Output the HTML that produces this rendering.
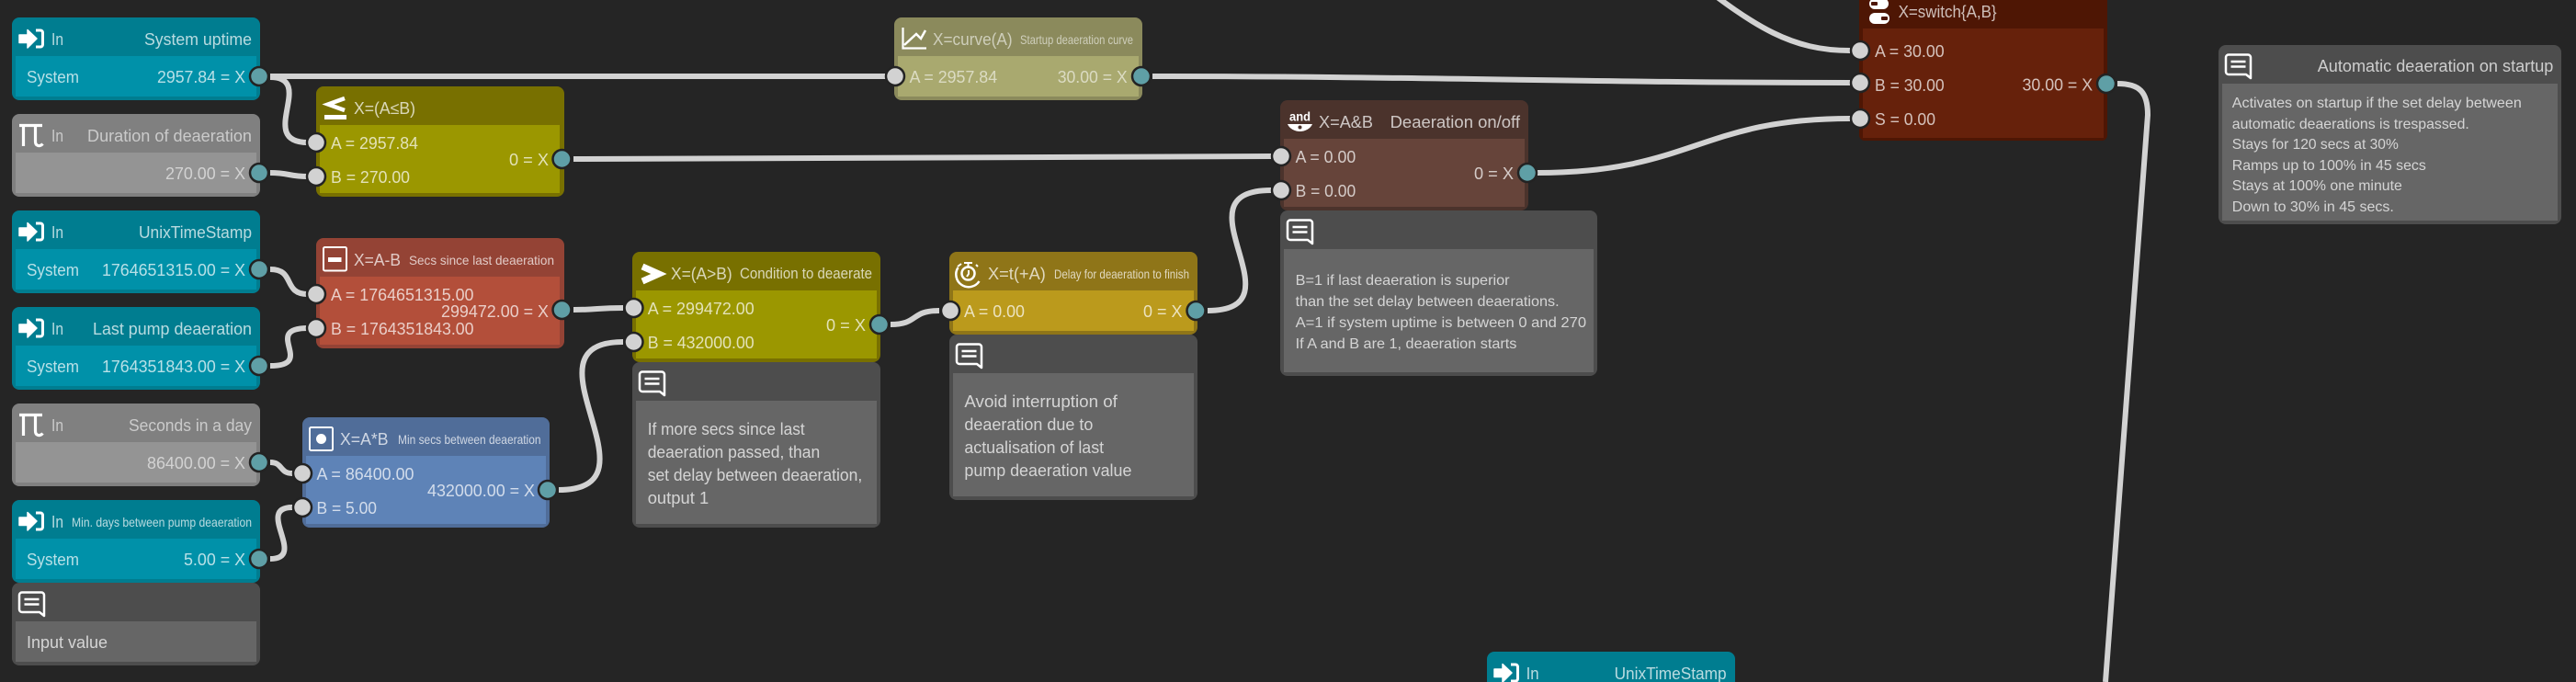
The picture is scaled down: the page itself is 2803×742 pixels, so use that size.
<!DOCTYPE html>
<html><head><meta charset="utf-8"><title>Node graph</title>
<style>
html,body{margin:0;padding:0;background:#252525;width:2803px;height:742px;overflow:hidden}
svg{display:block}
text{font-family:"Liberation Sans",sans-serif;font-size:18.5px;fill:#fff;fill-opacity:.72}
.s{font-size:14px}
.m{font-size:16.5px}
.c{font-size:16px}
.d text{fill-opacity:.58}
.w{fill:none;stroke:#d2d2d2;stroke-width:6}
.pi{fill:#d2d2d2;stroke:#232323;stroke-width:2.500}
.po{fill:#5f9fa6;stroke:#232323;stroke-width:2.500}
</style></head><body>
<svg xmlns="http://www.w3.org/2000/svg" width="2803" height="742" viewBox="0 0 2803 742">
<defs>
<symbol id="inp" overflow="visible"><path d="M8 9h9V3.500L27 13 17 23v-5.500H8z" fill="#fff" stroke="#fff" stroke-width="1.500" stroke-linejoin="round"/><path d="M26 4h5a2.500 2.500 0 0 1 2.500 2.500v13a2.500 2.500 0 0 1-2.500 2.500h-5" fill="none" stroke="#fff" stroke-width="3"/></symbol>
<symbol id="pi" overflow="visible"><path d="M8 3.500H33M12.500 3.500V26M25.500 3.500V21c0 5 5 6 8 2.500" fill="none" stroke="#fff" stroke-width="3.200"/></symbol>
<symbol id="cm" overflow="visible"><path d="M8 3.500a3 3 0 0 1 3-3h21a3 3 0 0 1 3 3V26l-5-4H11a3 3 0 0 1-3-3z" fill="none" stroke="#fff" stroke-width="2.500" stroke-linejoin="round"/><path d="M13.500 8h16M13.500 13.500h16" stroke="#fff" stroke-width="2.500"/></symbol>
</defs>

<rect width="2803" height="742" fill="#252525"/>

<!-- wires -->
<path class="w" d="M294 83H974"/>
<path class="w" d="M294 84C345 84 278 155 335 155"/>
<path class="w" d="M294 188C315 188 314 192 335 192"/>
<path class="w" d="M294 293C322 293 307 320 335 320"/>
<path class="w" d="M294 398C345 398 284 357 335 357"/>
<path class="w" d="M294 503C308 503 304 515 318 515"/>
<path class="w" d="M294 608C335 608 277 552 318 552"/>
<path class="w" d="M624 173C900 173 1100 170 1383 170"/>
<path class="w" d="M624 337C650 337 650 335 678 335"/>
<path class="w" d="M608 533C725 533 561 372 678 372"/>
<path class="w" d="M969 353C1000 353 990 338 1022 338"/>
<path class="w" d="M1314 338C1420 338 1275 207 1383 207"/>
<path class="w" d="M1254 83C1550 83 1720 90 2013 90"/>
<path class="w" d="M1673 188C1840 188 1850 129 2013 129"/>
<path class="w" d="M1840 -25C1910 30 1950 55 2013 55"/>
<path class="w" d="M2304 91C2328 91 2337 100 2337 125L2291 742"/>

<!-- Node: System uptime -->
<rect x="13" y="19" width="270" height="90" rx="8" fill="#007d90"/><rect x="17" y="61" width="262" height="44" fill="#0091a9"/>
<use href="#inp" x="13" y="29"/>
<text x="56" y="49" textLength="13" lengthAdjust="spacingAndGlyphs">In</text>
<text x="157" y="49" textLength="117" lengthAdjust="spacingAndGlyphs">System uptime</text>
<text x="29" y="90" textLength="57" lengthAdjust="spacingAndGlyphs">System</text>
<text x="171" y="90" textLength="96" lengthAdjust="spacingAndGlyphs">2957.84 = X</text>

<!-- Node: Duration -->
<g class="d">
<rect x="13" y="124" width="270" height="90" rx="8" fill="#808080"/><rect x="17" y="166" width="262" height="44" fill="#949494"/>
<use href="#pi" x="13" y="133"/>
<text x="56" y="154" textLength="13" lengthAdjust="spacingAndGlyphs">In</text>
<text x="95" y="154" textLength="179" lengthAdjust="spacingAndGlyphs">Duration of deaeration</text>
<text x="180" y="195" textLength="87" lengthAdjust="spacingAndGlyphs">270.00 = X</text>
</g>

<!-- Node: UnixTimeStamp -->
<rect x="13" y="229" width="270" height="90" rx="8" fill="#007d90"/><rect x="17" y="271" width="262" height="44" fill="#0091a9"/>
<use href="#inp" x="13" y="239"/>
<text x="56" y="259" textLength="13" lengthAdjust="spacingAndGlyphs">In</text>
<text x="151" y="259" textLength="123" lengthAdjust="spacingAndGlyphs">UnixTimeStamp</text>
<text x="29" y="300" textLength="57" lengthAdjust="spacingAndGlyphs">System</text>
<text x="111" y="300" textLength="156" lengthAdjust="spacingAndGlyphs">1764651315.00 = X</text>

<!-- Node: Last pump -->
<rect x="13" y="334" width="270" height="90" rx="8" fill="#007d90"/><rect x="17" y="376" width="262" height="44" fill="#0091a9"/>
<use href="#inp" x="13" y="344"/>
<text x="56" y="364" textLength="13" lengthAdjust="spacingAndGlyphs">In</text>
<text x="101" y="364" textLength="173" lengthAdjust="spacingAndGlyphs">Last pump deaeration</text>
<text x="29" y="405" textLength="57" lengthAdjust="spacingAndGlyphs">System</text>
<text x="111" y="405" textLength="156" lengthAdjust="spacingAndGlyphs">1764351843.00 = X</text>

<!-- Node: Seconds in a day -->
<g class="d">
<rect x="13" y="439" width="270" height="90" rx="8" fill="#808080"/><rect x="17" y="481" width="262" height="44" fill="#949494"/>
<use href="#pi" x="13" y="448"/>
<text x="56" y="469" textLength="13" lengthAdjust="spacingAndGlyphs">In</text>
<text x="140" y="469" textLength="134" lengthAdjust="spacingAndGlyphs">Seconds in a day</text>
<text x="160" y="510" textLength="107" lengthAdjust="spacingAndGlyphs">86400.00 = X</text>
</g>

<!-- Node: Min days -->
<rect x="13" y="544" width="270" height="90" rx="8" fill="#007d90"/><rect x="17" y="586" width="262" height="44" fill="#0091a9"/>
<use href="#inp" x="13" y="554"/>
<text x="56" y="574" textLength="13" lengthAdjust="spacingAndGlyphs">In</text>
<text class="s" x="78" y="573" textLength="196" lengthAdjust="spacingAndGlyphs">Min. days between pump deaeration</text>
<text x="29" y="615" textLength="57" lengthAdjust="spacingAndGlyphs">System</text>
<text x="200" y="615" textLength="67" lengthAdjust="spacingAndGlyphs">5.00 = X</text>

<!-- Comment: Input value -->
<rect x="13" y="634" width="270" height="90" rx="8" fill="#4d4d4d"/><rect x="17" y="676" width="262" height="44" fill="#666"/>
<use href="#cm" x="13" y="644"/>
<text x="29" y="705" textLength="88" lengthAdjust="spacingAndGlyphs">Input value</text>

<!-- Op: X=(A≤B) -->
<rect x="344" y="94" width="270" height="120" rx="8" fill="#787000"/><rect x="348" y="136" width="261" height="74" fill="#9b9700"/>
<path d="M375 107L357 113.500 375 120" fill="none" stroke="#fff" stroke-width="4.500"/><rect x="353" y="125" width="24" height="5" fill="#fff"/>
<text x="385" y="124" textLength="67" lengthAdjust="spacingAndGlyphs">X=(A≤B)</text>
<text x="360" y="162" textLength="95" lengthAdjust="spacingAndGlyphs">A = 2957.84</text>
<text x="360" y="199" textLength="86" lengthAdjust="spacingAndGlyphs">B = 270.00</text>
<text x="554" y="180" textLength="43" lengthAdjust="spacingAndGlyphs">0 = X</text>

<!-- Op: X=A-B -->
<rect x="344" y="259" width="270" height="120" rx="8" fill="#944335"/><rect x="348" y="301" width="261" height="74" fill="#b34f3a"/>
<rect x="352" y="269" width="25" height="25.500" rx="1.500" fill="none" stroke="#fff" stroke-width="2"/><rect x="357" y="280" width="14.500" height="5" fill="#fff"/>
<text x="385" y="289" textLength="51" lengthAdjust="spacingAndGlyphs">X=A-B</text>
<text class="s" x="445" y="288" textLength="158" lengthAdjust="spacingAndGlyphs">Secs since last deaeration</text>
<text x="360" y="327" textLength="155.500" lengthAdjust="spacingAndGlyphs">A = 1764651315.00</text>
<text x="360" y="364" textLength="155.500" lengthAdjust="spacingAndGlyphs">B = 1764351843.00</text>
<text x="480" y="345" textLength="117" lengthAdjust="spacingAndGlyphs">299472.00 = X</text>

<!-- Op: X=A*B -->
<rect x="329" y="454" width="269" height="120" rx="8" fill="#506d99"/><rect x="333" y="496" width="261" height="74" fill="#5e83b7"/>
<rect x="337" y="465" width="25" height="25" rx="1.500" fill="none" stroke="#fff" stroke-width="2"/><circle cx="349.500" cy="477.500" r="5.500" fill="#fff"/>
<text x="370" y="484" textLength="52.500" lengthAdjust="spacingAndGlyphs">X=A*B</text>
<text class="s" x="433" y="483" textLength="155.500" lengthAdjust="spacingAndGlyphs">Min secs between deaeration</text>
<text x="344.500" y="522" textLength="106" lengthAdjust="spacingAndGlyphs">A = 86400.00</text>
<text x="344.500" y="559" textLength="65.500" lengthAdjust="spacingAndGlyphs">B = 5.00</text>
<text x="465" y="540" textLength="117" lengthAdjust="spacingAndGlyphs">432000.00 = X</text>

<!-- Op: curve -->
<g class="d">
<rect x="973" y="19" width="270" height="90" rx="8" fill="#8b8a5c"/><rect x="977" y="61" width="262" height="44" fill="#a9a96f"/>
<path d="M982.500 30V52.500H1008" fill="none" stroke="#fff" stroke-width="2.200"/><path d="M984 49L997 37 1002 42 1007 33" fill="none" stroke="#fff" stroke-width="2.500"/>
<text x="1015" y="49" textLength="86.600" lengthAdjust="spacingAndGlyphs">X=curve(A)</text>
<text class="s" x="1110" y="48" textLength="123" lengthAdjust="spacingAndGlyphs">Startup deaeration curve</text>
<text x="989.600" y="90" textLength="95.500" lengthAdjust="spacingAndGlyphs">A = 2957.84</text>
<text x="1150.700" y="90" textLength="76" lengthAdjust="spacingAndGlyphs">30.00 = X</text>
</g>

<!-- Op: X=(A>B) -->
<rect x="688" y="274" width="270" height="120" rx="8" fill="#787000"/><rect x="692" y="316" width="262" height="74" fill="#9b9700"/>
<path d="M699 290L717 298 699 306" fill="none" stroke="#fff" stroke-width="7"/>
<text x="730" y="304" textLength="66.700" lengthAdjust="spacingAndGlyphs">X=(A&gt;B)</text>
<text class="m" x="805" y="303" textLength="144" lengthAdjust="spacingAndGlyphs">Condition to deaerate</text>
<text x="704.700" y="342" textLength="116" lengthAdjust="spacingAndGlyphs">A = 299472.00</text>
<text x="704.700" y="379" textLength="116" lengthAdjust="spacingAndGlyphs">B = 432000.00</text>
<text x="899" y="360" textLength="43" lengthAdjust="spacingAndGlyphs">0 = X</text>

<!-- Comment under > -->
<rect x="688" y="394" width="270" height="180" rx="8" fill="#4d4d4d"/><rect x="692" y="436" width="262" height="134" fill="#666"/>
<use href="#cm" x="688" y="404"/>
<text x="704.700" y="473" textLength="171" lengthAdjust="spacingAndGlyphs">If more secs since last</text>
<text x="704.700" y="498" textLength="187.500" lengthAdjust="spacingAndGlyphs">deaeration passed, than</text>
<text x="704.700" y="523" textLength="233.500" lengthAdjust="spacingAndGlyphs">set delay between deaeration,</text>
<text x="704.700" y="548" textLength="66.500" lengthAdjust="spacingAndGlyphs">output 1</text>

<!-- Op: X=t(+A) -->
<rect x="1033" y="274" width="270" height="90" rx="8" fill="#8f7518"/><rect x="1037" y="316" width="262" height="44" fill="#bb9a1c"/>
<circle cx="1053.500" cy="297.500" r="7" fill="none" stroke="#fff" stroke-width="2.500"/>
<path d="M1042.500 291a13 13 0 0 0 23 15" fill="none" stroke="#fff" stroke-width="2.500"/>
<path d="M1049 286h9M1053.500 286v4M1042 290l4-3M1062 288l2 2M1054 294v4l-2 3" fill="none" stroke="#fff" stroke-width="2"/>
<text x="1075" y="304" textLength="62.800" lengthAdjust="spacingAndGlyphs">X=t(+A)</text>
<text class="s" x="1147" y="303" textLength="147" lengthAdjust="spacingAndGlyphs">Delay for deaeration to finish</text>
<text x="1049" y="345" textLength="66" lengthAdjust="spacingAndGlyphs">A = 0.00</text>
<text x="1244" y="345" textLength="42.500" lengthAdjust="spacingAndGlyphs">0 = X</text>

<!-- Comment under t -->
<rect x="1033" y="364" width="270" height="180" rx="8" fill="#4d4d4d"/><rect x="1037" y="406" width="262" height="134" fill="#666"/>
<use href="#cm" x="1033" y="374"/>
<text x="1049.400" y="443" textLength="166.500" lengthAdjust="spacingAndGlyphs">Avoid interruption of</text>
<text x="1049.400" y="468" textLength="140" lengthAdjust="spacingAndGlyphs">deaeration due to</text>
<text x="1049.400" y="493" textLength="151.700" lengthAdjust="spacingAndGlyphs">actualisation of last</text>
<text x="1049.400" y="518" textLength="182" lengthAdjust="spacingAndGlyphs">pump deaeration value</text>

<!-- Op: and -->
<rect x="1393" y="109" width="270" height="120" rx="8" fill="#4b332c"/><rect x="1397" y="151" width="262" height="74" fill="#66443a"/>
<text x="1403" y="131.500" textLength="23" lengthAdjust="spacingAndGlyphs" style="font-size:14px;font-weight:bold;fill-opacity:1">and</text>
<path d="M1401 135H1428C1426 140 1420 143 1414.500 143S1403 140 1401 135Z" fill="#fff"/><circle cx="1414.500" cy="138.500" r="2" fill="#4b332c"/>
<text x="1435" y="139" textLength="59" lengthAdjust="spacingAndGlyphs">X=A&amp;B</text>
<text x="1512.600" y="139" textLength="141.400" lengthAdjust="spacingAndGlyphs">Deaeration on/off</text>
<text x="1409.600" y="177" textLength="65.600" lengthAdjust="spacingAndGlyphs">A = 0.00</text>
<text x="1409.600" y="214" textLength="65.600" lengthAdjust="spacingAndGlyphs">B = 0.00</text>
<text x="1604" y="195" textLength="43" lengthAdjust="spacingAndGlyphs">0 = X</text>

<!-- Comment under and -->
<rect x="1393" y="229" width="345" height="180" rx="8" fill="#4d4d4d"/><rect x="1397" y="271" width="337" height="134" fill="#666"/>
<use href="#cm" x="1393" y="239"/>
<text class="c" x="1409.600" y="310" textLength="233" lengthAdjust="spacingAndGlyphs">B=1 if last deaeration is superior</text>
<text class="c" x="1409.600" y="333" textLength="287" lengthAdjust="spacingAndGlyphs">than the set delay between deaerations.</text>
<text class="c" x="1409.600" y="356" textLength="316.500" lengthAdjust="spacingAndGlyphs">A=1 if system uptime is between 0 and 270</text>
<text class="c" x="1409.600" y="379" textLength="240.800" lengthAdjust="spacingAndGlyphs">If A and B are 1, deaeration starts</text>

<!-- Op: switch -->
<rect x="2023" y="-11" width="270" height="164" rx="6" fill="#4e1604"/><rect x="2027" y="31" width="262" height="119" fill="#66210b"/>
<rect x="2034" y="-2" width="21" height="12" rx="6" fill="#fff"/><rect x="2036" y="2" width="7" height="4" rx="1" fill="#4e1604"/>
<rect x="2034" y="14" width="22" height="12" rx="6" fill="#fff"/><rect x="2047" y="18" width="7" height="4" rx="1" fill="#4e1604"/>
<text x="2065.600" y="19" textLength="107" lengthAdjust="spacingAndGlyphs">X=switch{A,B}</text>
<text x="2040" y="62" textLength="75.600" lengthAdjust="spacingAndGlyphs">A = 30.00</text>
<text x="2040" y="99" textLength="75.600" lengthAdjust="spacingAndGlyphs">B = 30.00</text>
<text x="2040" y="136" textLength="66" lengthAdjust="spacingAndGlyphs">S = 0.00</text>
<text x="2200.500" y="98.500" textLength="76.600" lengthAdjust="spacingAndGlyphs">30.00 = X</text>

<!-- Comment right -->
<rect x="2414" y="49" width="373" height="195" rx="8" fill="#4d4d4d"/><rect x="2418" y="91" width="365" height="149" fill="#666"/>
<use href="#cm" x="2414" y="59"/>
<text x="2521.700" y="78" textLength="256.700" lengthAdjust="spacingAndGlyphs">Automatic deaeration on startup</text>
<text class="c" x="2428.800" y="117" textLength="315" lengthAdjust="spacingAndGlyphs">Activates on startup if the set delay between</text>
<text class="c" x="2428.800" y="140" textLength="258" lengthAdjust="spacingAndGlyphs">automatic deaerations is trespassed.</text>
<text class="c" x="2428.800" y="162" textLength="181" lengthAdjust="spacingAndGlyphs">Stays for 120 secs at 30%</text>
<text class="c" x="2428.800" y="185" textLength="211" lengthAdjust="spacingAndGlyphs">Ramps up to 100% in 45 secs</text>
<text class="c" x="2428.800" y="207" textLength="185" lengthAdjust="spacingAndGlyphs">Stays at 100% one minute</text>
<text class="c" x="2428.800" y="230" textLength="176" lengthAdjust="spacingAndGlyphs">Down to 30% in 45 secs.</text>

<!-- Bottom node -->
<rect x="1618" y="709" width="270" height="60" rx="8" fill="#007d90"/>
<use href="#inp" x="1618" y="719"/>
<text x="1660.600" y="739" textLength="14" lengthAdjust="spacingAndGlyphs">In</text>
<text x="1756.600" y="739" textLength="122" lengthAdjust="spacingAndGlyphs">UnixTimeStamp</text>

<!-- ports -->
<g><circle class="po" cx="282" cy="83" r="10"/><circle class="po" cx="282" cy="188" r="10"/><circle class="po" cx="282" cy="293" r="10"/><circle class="po" cx="282" cy="398" r="10"/><circle class="po" cx="282" cy="503" r="10"/><circle class="po" cx="282" cy="608" r="10"/><circle class="po" cx="611.500" cy="173" r="10"/><circle class="po" cx="611.500" cy="337" r="10"/><circle class="po" cx="596" cy="533" r="10"/><circle class="po" cx="1242" cy="83" r="10"/><circle class="po" cx="957" cy="353" r="10"/><circle class="po" cx="1301.500" cy="338" r="10"/><circle class="po" cx="1662" cy="188" r="10"/><circle class="po" cx="2292" cy="91" r="10"/></g>
<g><circle class="pi" cx="344" cy="155" r="10"/><circle class="pi" cx="344" cy="192" r="10"/><circle class="pi" cx="344" cy="320" r="10"/><circle class="pi" cx="344" cy="357" r="10"/><circle class="pi" cx="329" cy="515" r="10"/><circle class="pi" cx="329" cy="552" r="10"/><circle class="pi" cx="974" cy="83" r="10"/><circle class="pi" cx="689.500" cy="335" r="10"/><circle class="pi" cx="689.500" cy="372" r="10"/><circle class="pi" cx="1034" cy="338" r="10"/><circle class="pi" cx="1394" cy="170" r="10"/><circle class="pi" cx="1394" cy="207" r="10"/><circle class="pi" cx="2024" cy="55" r="10"/><circle class="pi" cx="2024" cy="90" r="10"/><circle class="pi" cx="2024" cy="129" r="10"/></g>
</svg>
</body></html>
